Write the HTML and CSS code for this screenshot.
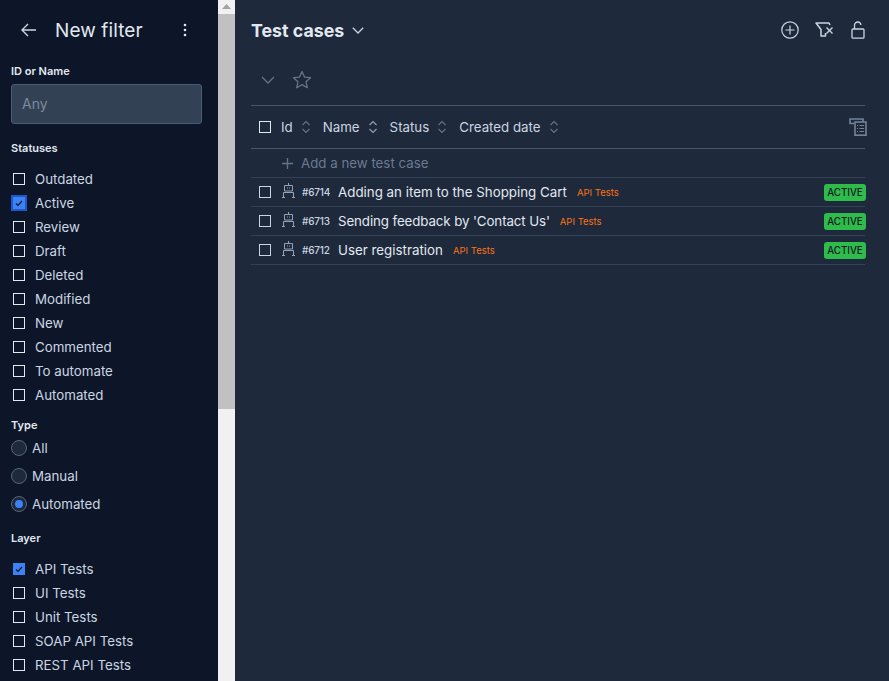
FILE: index.html
```html
<!DOCTYPE html>
<html lang="en">
<head>
<meta charset="utf-8">
<title>Test cases</title>
<link rel="stylesheet" href="styles.css">
</head>
<body>
<div class="app">
  <aside class="sidebar">
    <header class="side-head">
      <svg class="back" width="18" height="14" viewBox="0 0 18 14"><path d="M16 7H2M8 1 2 7l6 6" fill="none" stroke="#cbd5e1" stroke-width="1.4"/></svg>
      <span class="side-title">New filter</span>
      <svg class="kebab" width="4" height="14" viewBox="0 0 4 14"><circle cx="2" cy="2" r="1.3" fill="#e2e8f0"/><circle cx="2" cy="7" r="1.3" fill="#e2e8f0"/><circle cx="2" cy="12" r="1.3" fill="#e2e8f0"/></svg>
    </header>
    <div class="label label-id">ID or Name</div>
    <div class="input">Any</div>
    <div class="label label-status">Statuses</div>
    <ul class="checks">
      <li><span class="box"></span>Outdated</li>
      <li><span class="box box-on box-focus"><svg width="8" height="7" viewBox="0 0 8 7"><path d="M1 3.500 3 5.500 7 1" fill="none" stroke="#0d1629" stroke-width="1.2"/></svg></span>Active</li>
      <li><span class="box"></span>Review</li>
      <li><span class="box"></span>Draft</li>
      <li><span class="box"></span>Deleted</li>
      <li><span class="box"></span>Modified</li>
      <li><span class="box"></span>New</li>
      <li><span class="box"></span>Commented</li>
      <li><span class="box"></span>To automate</li>
      <li><span class="box"></span>Automated</li>
    </ul>
    <div class="label label-type">Type</div>
    <ul class="radios">
      <li><span class="radio"></span>All</li>
      <li><span class="radio"></span>Manual</li>
      <li><span class="radio radio-on"></span>Automated</li>
    </ul>
    <div class="label label-layer">Layer</div>
    <ul class="checks">
      <li><span class="box box-on"><svg width="8" height="7" viewBox="0 0 8 7"><path d="M1 3.500 3 5.500 7 1" fill="none" stroke="#0d1629" stroke-width="1.2"/></svg></span>API Tests</li>
      <li><span class="box"></span>UI Tests</li>
      <li><span class="box"></span>Unit Tests</li>
      <li><span class="box"></span>SOAP API Tests</li>
      <li><span class="box"></span>REST API Tests</li>
    </ul>
  </aside>
  <div class="scrollbar">
    <div class="scroll-up"><svg width="9" height="5" viewBox="0 0 9 5"><path d="M4.500 0 9 5H0z" fill="#a3a3a3"/></svg></div>
    <div class="scroll-thumb"></div>
  </div>
  <main class="main">
    <header class="main-head">
      <h1 class="title">Test cases</h1>
      <svg class="title-chev" width="12" height="7" viewBox="0 0 12 7"><path d="M.8.8 6 6l5.200-5.200" fill="none" stroke="#cbd5e1" stroke-width="1.3"/></svg>
      <div class="head-actions">
        <svg width="18" height="18" viewBox="0 0 18 18"><circle cx="9" cy="9" r="8.200" fill="none" stroke="#cbd5e1" stroke-width="1.2"/><path d="M9 4.500v9M4.500 9h9" stroke="#cbd5e1" stroke-width="1.2"/></svg>
        <svg width="19" height="16" viewBox="0 0 19 16"><path d="M15 3 14 1H1l5 6.500V14h4.500v-3" fill="none" stroke="#cbd5e1" stroke-width="1.500" stroke-linejoin="round"/><path d="M11.500 5.500l6 6M17.500 5.500l-6 6" stroke="#cbd5e1" stroke-width="1.400"/></svg>
        <svg class="lock" width="14" height="18" viewBox="0 0 14 18"><path d="M3.500 8V4.200C3.500 2.400 5 1 6.700 1s3 1.200 3.200 3" fill="none" stroke="#cbd5e1" stroke-width="1.3"/><rect x="1" y="8" width="12" height="9.200" rx="1" fill="none" stroke="#cbd5e1" stroke-width="1.3"/></svg>
      </div>
    </header>
    <div class="tools">
      <svg width="14" height="8" viewBox="0 0 14 8"><path d="M1 1l6 6 6-6" fill="none" stroke="#64748b" stroke-width="1.3"/></svg>
      <svg width="20" height="19" viewBox="0 0 20 19"><path d="M10 1.500l2.500 5.600 6 .6-4.500 4 1.300 6L10 14.600l-5.300 3.100 1.300-6-4.500-4 6-.6z" fill="none" stroke="#64748b" stroke-width="1.3" stroke-linejoin="round"/></svg>
    </div>
    <div class="thead">
      <span class="box"></span>
      <span class="th">Id<svg width="10" height="14" viewBox="0 0 10 14"><path d="M1.500 5 5 1.500 8.500 5M1.500 9 5 12.500 8.500 9" fill="none" stroke="#64748b" stroke-width="1.1"/></svg></span>
      <span class="th">Name<svg width="10" height="14" viewBox="0 0 10 14"><path d="M1.500 5 5 1.500 8.500 5M1.500 9 5 12.500 8.500 9" fill="none" stroke="#94a3b8" stroke-width="1.1"/></svg></span>
      <span class="th">Status<svg width="10" height="14" viewBox="0 0 10 14"><path d="M1.500 5 5 1.500 8.500 5M1.500 9 5 12.500 8.500 9" fill="none" stroke="#64748b" stroke-width="1.1"/></svg></span>
      <span class="th">Created date<svg width="10" height="14" viewBox="0 0 10 14"><path d="M1.500 5 5 1.500 8.500 5M1.500 9 5 12.500 8.500 9" fill="none" stroke="#64748b" stroke-width="1.1"/></svg></span>
      <svg class="columns" width="18" height="18" viewBox="0 0 18 18"><path d="M5 5.500H1V1h13v3" fill="none" stroke="#74839a" stroke-width="1.600"/><rect x="6" y="4" width="11" height="13.200" fill="#1e293b" stroke="#74839a" stroke-width="1.600"/><path d="M8 7.500h1M10.500 7.500h4.500M8 10.500h1M10.500 10.500h4.500M8 13.500h1M10.500 13.500h4.500" stroke="#74839a" stroke-width="1.200"/></svg>
    </div>
    <div class="add-row">
      <svg width="11" height="11" viewBox="0 0 11 11"><path d="M5.500 0v11M0 5.500h11" stroke="#64748b" stroke-width="1.300"/></svg>
      <span>Add a new test case</span>
    </div>
    <div class="row">
      <span class="box"></span>
      <svg class="robot" width="13" height="15" viewBox="0 0 13 15"><path d="M6.500 0v2.500M2.500 2.500h8v5.500h-8zM5 5h1M7 5h1M1.500 14.500V9.500h10v5M0 14.500h3M10 14.500h3" fill="none" stroke="#94a3b8" stroke-width="1"/></svg>
      <span class="id">#6714</span>
      <span class="name">Adding an item to the Shopping Cart</span>
      <span class="tag">API Tests</span>
      <span class="badge">ACTIVE</span>
    </div>
    <div class="row">
      <span class="box"></span>
      <svg class="robot" width="13" height="15" viewBox="0 0 13 15"><path d="M6.500 0v2.500M2.500 2.500h8v5.500h-8zM5 5h1M7 5h1M1.500 14.500V9.500h10v5M0 14.500h3M10 14.500h3" fill="none" stroke="#94a3b8" stroke-width="1"/></svg>
      <span class="id">#6713</span>
      <span class="name name-tight">Sending feedback by 'Contact Us'</span>
      <span class="tag">API Tests</span>
      <span class="badge">ACTIVE</span>
    </div>
    <div class="row">
      <span class="box"></span>
      <svg class="robot" width="13" height="15" viewBox="0 0 13 15"><path d="M6.500 0v2.500M2.500 2.500h8v5.500h-8zM5 5h1M7 5h1M1.500 14.500V9.500h10v5M0 14.500h3M10 14.500h3" fill="none" stroke="#94a3b8" stroke-width="1"/></svg>
      <span class="id">#6712</span>
      <span class="name">User registration</span>
      <span class="tag">API Tests</span>
      <span class="badge">ACTIVE</span>
    </div>
  </main>
</div>
</body>
</html>
```
FILE: styles.css
```css
* { box-sizing: border-box; }
html, body { margin: 0; padding: 0; height: 100%; overflow: hidden; }
body { font-family: Inter, "Noto Sans", sans-serif; color: #e2e8f0; background: #1e293b; }
ul { list-style: none; margin: 0; padding: 0; }
svg { display: block; flex: none; }
.app { display: flex; height: 681px; width: 889px; }

.sidebar { width: 218px; flex: none; background: #0d1629; padding: 0 16px 0 11px; overflow: hidden; }
.side-head { display: flex; align-items: center; height: 60px; padding-left: 9px; }
.side-title { font-size: 19px; margin-left: 17px; color: #e2e8f0; letter-spacing: 0.1px; }
.kebab { margin-left: auto; margin-right: 15px; }
.label { font-size: 11px; font-weight: 600; color: #e2e8f0; line-height: 14px; }
.label-id { margin-top: 4px; }
.input { margin-top: 6px; height: 40px; border: 1px solid #4b5b72; border-radius: 3px; background: #334155; color: #7b8aa0; font-size: 14px; line-height: 38px; padding-left: 10px; }
.label-status { margin-top: 17px; }
.label-type { margin-top: 11px; }
.label-layer { margin-top: 13px; }
.checks { margin-top: 12px; }
.checks li { display: flex; align-items: center; height: 24px; font-size: 13.3px; color: #cbd5e1; }
.box { width: 12px; height: 12px; border: 1px solid #e2e8f0; margin: 0 10px 0 2px; flex: none; display: flex; align-items: center; justify-content: center; }
.box-on { background: #3b82f6; border-color: #3b82f6; }
.box-focus { box-shadow: 0 0 0 2px #2158c9; }
.radios li { display: flex; align-items: center; height: 28px; font-size: 13.3px; color: #cbd5e1; }
.label-type + .radios { margin-top: 2px; }
.radio { width: 16px; height: 16px; border-radius: 50%; background: #1e293b; border: 1px solid #56657b; margin-right: 5px; flex: none; display: flex; align-items: center; justify-content: center; }
.radio-on::after { content: ""; width: 8px; height: 8px; border-radius: 50%; background: #3b82f6; }

.scrollbar { width: 17px; flex: none; background: #f1f1f1; }
.scroll-up { height: 14px; display: flex; justify-content: center; padding-top: 4px; }
.scroll-thumb { height: 395px; background: #c1c1c1; }

.main { flex: 1; min-width: 0; padding: 0 24px 0 16px; background: #1e293b; }
.main-head { display: flex; align-items: center; height: 60px; }
.title { margin: 0; font-size: 17.8px; font-weight: 700; color: #e2e8f0; }
.title-chev { margin-left: 8px; margin-top: 1px; }
.head-actions { margin-left: auto; display: flex; align-items: center; gap: 16px; }
.lock { margin-left: 1px; }
.tools { display: flex; align-items: center; gap: 17px; height: 46px; padding: 0 0 6px 10px; border-bottom: 1px solid #475569; }
.thead { display: flex; align-items: center; height: 43px; border-bottom: 1px solid #475569; padding-left: 8px; font-size: 13.3px; color: #cbd5e1; }
.thead .box { margin: 0 10px 0 0; }
.th { display: flex; align-items: center; gap: 8px; margin-right: 12px; }
.columns { margin-left: auto; margin-right: -2px; }
.add-row { display: flex; align-items: center; height: 29px; border-bottom: 1px solid #334155; padding-left: 31px; font-size: 13.3px; color: #6b7a90; gap: 8px; }
.row { display: flex; align-items: center; height: 29px; border-bottom: 1px solid #334155; padding-left: 8px; }
.row .box { margin: 0 11px 0 0; border-color: #cbd5e1; }
.robot { margin-top: -3px; }
.id { font-size: 10px; font-weight: 500; letter-spacing: -0.2px; color: #cbd5e1; margin-left: 7px; width: 36px; }
.name { font-size: 13.35px; color: #e2e8f0; }
.name-tight { letter-spacing: -0.12px; }
.tag { font-size: 9.5px; color: #f97316; margin-left: 10px; }
.badge { margin-left: auto; margin-right: -1px; width: 42px; height: 17px; border-radius: 3px; background: #2ebd4a; color: #0d1629; font-size: 9.7px; font-weight: 500; text-align: center; line-height: 17px; }
```
